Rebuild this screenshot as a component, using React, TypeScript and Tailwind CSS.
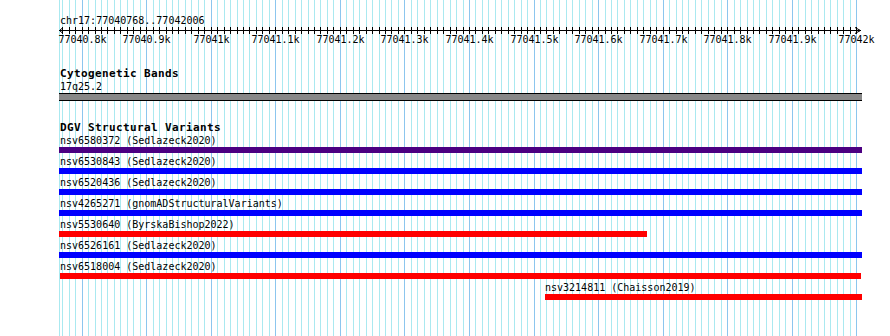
const VIEW_START = 77040768;
const VIEW_END = 77042006;
const X0 = 61; // screen x of VIEW_START
const PX_PER_BP = 0.6455;
const TRACK_LEFT = 59;
const TRACK_W = 803;

const bpToX = (bp: number) => X0 + (bp - VIEW_START) * PX_PER_BP;

type Variant = { name: string; source: string; x1: number; x2: number; color: string };

// x1/x2 are screen px, already clipped to the track area
const VARIANTS: Variant[] = [
  { name: "nsv6580372", source: "Sedlazeck2020", x1: 59, x2: 862, color: "#4b0082" },
  { name: "nsv6530843", source: "Sedlazeck2020", x1: 59, x2: 862, color: "#0000ff" },
  { name: "nsv6520436", source: "Sedlazeck2020", x1: 59, x2: 862, color: "#0000ff" },
  { name: "nsv4265271", source: "gnomADStructuralVariants", x1: 59, x2: 862, color: "#0000ff" },
  { name: "nsv5530640", source: "ByrskaBishop2022", x1: 59, x2: 647, color: "#ff0000" },
  { name: "nsv6526161", source: "Sedlazeck2020", x1: 59, x2: 862, color: "#0000ff" },
  { name: "nsv6518004", source: "Sedlazeck2020", x1: 60, x2: 861, color: "#ff0000" },
  { name: "nsv3214811", source: "Chaisson2019", x1: 545, x2: 862, color: "#ff0000" },
];

// every 10bp inside the view
const TICKS: { bp: number; x: number; major: boolean }[] = [];
for (let bp = Math.ceil(VIEW_START / 10) * 10; bp <= VIEW_END; bp += 10) {
  TICKS.push({ bp, x: Math.round(bpToX(bp)) + 0.5, major: bp % 100 === 0 });
}

const fmtLabel = (bp: number) => {
  const k = bp / 1000;
  return `${Number.isInteger(k) ? k : k.toFixed(1)}k`;
};

const GridLines = () => (
  <svg className="absolute inset-0 pointer-events-none" width={890} height={336}>
    <line x1={59.5} x2={59.5} y1={0} y2={336} stroke="#aae9f0" strokeWidth={1} />
    {TICKS.map((t) => (
      <line key={t.bp} x1={t.x} x2={t.x} y1={0} y2={336} stroke={t.major ? "#8cc6ee" : "#aae9f0"} strokeWidth={1} />
    ))}
  </svg>
);

const Ruler = () => (
  <div className="relative">
    <div className="pl-px leading-[13px] text-[10px] text-black">
      chr17:{VIEW_START}..{VIEW_END}
    </div>
    {/* axis with a tick every 10bp */}
    <svg className="block" width={TRACK_W} height={7}>
      <line x1={0} x2={TRACK_W - 1} y1={3.5} y2={3.5} stroke="#000" strokeWidth={1} />
      <polyline points="4,0.5 0.5,3.5 4,6.5" fill="none" stroke="#000" strokeWidth={1} />
      <polyline points={`${TRACK_W - 7},0.5 ${TRACK_W - 1.5},3.5 ${TRACK_W - 7},6.5`} fill="none" stroke="#000" strokeWidth={1} />
      {TICKS.map((t) => (
        <line key={t.bp} x1={t.x - TRACK_LEFT} x2={t.x - TRACK_LEFT} y1={0} y2={7} stroke="#000" strokeWidth={1} />
      ))}
    </svg>
    <div className="relative h-[13px] -mt-px">
      {TICKS.filter((t) => t.major).map((t) => (
        <span
          key={t.bp}
          className="absolute top-0 -translate-x-1/2 whitespace-nowrap leading-[13px] text-[10px] text-black"
          style={{ left: t.x - TRACK_LEFT }}
        >
          {fmtLabel(t.bp)}
        </span>
      ))}
    </div>
  </div>
);

const TrackTitle = ({ children, className = "" }: { children: string; className?: string }) => (
  <div className={`pl-px leading-[13px] text-[11px] font-bold tracking-[0.38px] text-black ${className}`}>{children}</div>
);

const VariantRow = ({ v }: { v: Variant }) => (
  <div className="mb-[2px]">
    <div className="relative h-[13px]">
      <span
        className="absolute top-0 whitespace-nowrap leading-[13px] text-[10px] text-black"
        style={{ left: v.x1 - TRACK_LEFT + (v.x1 === TRACK_LEFT ? 1 : 0) }}
      >
        {v.name} ({v.source})
      </span>
    </div>
    <div className="relative h-[6px]">
      <div
        className="absolute top-0 h-[6px]"
        style={{ left: v.x1 - TRACK_LEFT, width: v.x2 - v.x1, backgroundColor: v.color }}
      />
    </div>
  </div>
);

export default function App() {
  return (
    <div className="relative w-[890px] h-[336px] overflow-hidden bg-white font-['DejaVu_Sans_Mono','Liberation_Mono',monospace]">
      <GridLines />
      <div className="relative ml-[59px] w-[803px] pt-[14px]">
        <Ruler />

        {/* Cytogenetic bands */}
        <TrackTitle className="mt-[21px]">Cytogenetic Bands</TrackTitle>
        <div className="pl-px leading-[13px] text-[10px] text-black">17q25.2</div>
        <div className="h-[8px] border-y border-black bg-[#888888]" />

        {/* DGV */}
        <TrackTitle className="mt-[20px]">DGV Structural Variants</TrackTitle>
        <div className="flex flex-col">
          {VARIANTS.map((v) => (
            <VariantRow key={v.name} v={v} />
          ))}
        </div>
      </div>
    </div>
  );
}
